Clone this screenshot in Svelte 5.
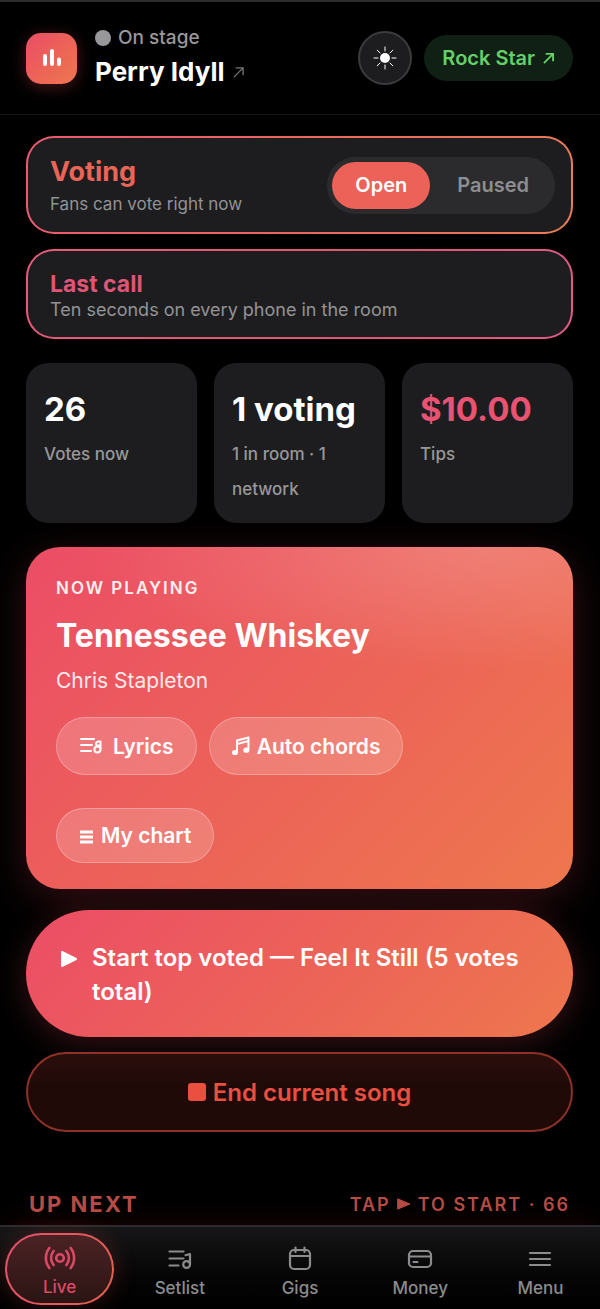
<script lang="ts">
	type Tab = { id: string; label: string };

	const stats = [
		{ value: '26', label: 'Votes now', accent: false },
		{ value: '1 voting', label: '1 in room · 1 network', accent: false },
		{ value: '$10.00', label: 'Tips', accent: true }
	];

	const tabs: Tab[] = [
		{ id: 'live', label: 'Live' },
		{ id: 'setlist', label: 'Setlist' },
		{ id: 'gigs', label: 'Gigs' },
		{ id: 'money', label: 'Money' },
		{ id: 'menu', label: 'Menu' }
	];

	let votingOpen = $state(true);
	let activeTab = $state('live');
</script>

{#snippet arrow(size: number)}
	<svg class="arrow" width={size} height={size} viewBox="0 0 12 12" aria-hidden="true">
		<path d="M1 11 L11 1 M3 1 H11 V9" />
	</svg>
{/snippet}

{#snippet tabIcon(id: string)}
	<svg class="tab-icon" width="28" height="28" viewBox="0 0 28 28" aria-hidden="true">
		{#if id === 'live'}
			<g stroke-width="2.6">
				<circle cx="14" cy="14" r="3.8" />
				<path d="M7.6 7 a11 11 0 0 0 0 14 M20.4 7 a11 11 0 0 1 0 14" />
				<path d="M3.4 4 a16 16 0 0 0 0 20 M24.6 4 a16 16 0 0 1 0 20" />
			</g>
		{:else if id === 'setlist'}
			<path d="M3.5 6.5 H17.5 M3.5 13.5 H17.5 M3.5 20.5 H12.5" />
			<path d="M24 19 V9 L19.5 10.2" />
			<circle cx="20.6" cy="19.5" r="3.4" />
		{:else if id === 'gigs'}
			<rect x="4" y="5" width="20" height="19" rx="4" />
			<path d="M4 11 H24 M9.5 2.5 V7 M18.5 2.5 V7" />
		{:else if id === 'money'}
			<rect x="3" y="6" width="22" height="16" rx="4" />
			<path d="M3 11.5 H25 M7.5 17 H11.5" />
		{:else}
			<path d="M4 8 H24 M4 14 H24 M4 20 H24" />
		{/if}
	</svg>
{/snippet}

<div class="page">
	<header>
		<div class="logo">
			<svg width="20" height="20" viewBox="0 0 20 20" aria-hidden="true">
				<path d="M3 8 V16 M10 3 V16 M17 11.5 V16" />
			</svg>
		</div>
		<div class="artist">
			<div class="status"><span class="dot"></span>On stage</div>
			<a class="name" href="#artist">Perry Idyll {@render arrow(11)}</a>
		</div>
		<button class="theme" aria-label="Switch theme">
			<svg width="24" height="24" viewBox="0 0 24 24" aria-hidden="true">
				<circle cx="12" cy="12" r="5" fill="#fff" />
				<path
					d="M12 1 V5 M12 19 V23 M1 12 H5 M19 12 H23 M4.2 4.2 L7 7 M17 17 L19.8 19.8 M4.2 19.8 L7 17 M17 7 L19.8 4.2"
				/>
			</svg>
		</button>
		<a class="plan" href="#plan">Rock Star {@render arrow(11)}</a>
	</header>

	<main>
		<section class="card voting">
			<div class="card-text">
				<h2>Voting</h2>
				<p>Fans can vote right now</p>
			</div>
			<div class="switch">
				<button class:on={votingOpen} onclick={() => (votingOpen = true)}>Open</button>
				<button class:on={!votingOpen} onclick={() => (votingOpen = false)}>Paused</button>
			</div>
		</section>

		<button class="card last-call">
			<strong>Last call</strong>
			<span>Ten seconds on every phone in the room</span>
		</button>

		<section class="stats">
			{#each stats as stat}
				<div class="stat">
					<div class="value" class:accent={stat.accent}>{stat.value}</div>
					<div class="label">{stat.label}</div>
				</div>
			{/each}
		</section>

		<section class="playing">
			<div class="eyebrow">NOW PLAYING</div>
			<h1>Tennessee Whiskey</h1>
			<p>Chris Stapleton</p>
			<div class="chips">
				<button class="chip tall lyrics">
					<svg width="24" height="20" viewBox="0 0 24 20" aria-hidden="true">
						<path d="M2 3 H15 M2 9 H13 M2 15 H12" />
						<path d="M21.5 5.5 V14 M21.5 5.5 Q17 5 17 8 Q17 10 21.5 9.5" />
						<ellipse cx="18.4" cy="13.5" rx="3" ry="3" />
					</svg>
					Lyrics
				</button>
				<button class="chip tall">
					<svg width="18" height="20" viewBox="0 0 18 20" aria-hidden="true">
						<path d="M5 16 V4.5 L16.5 1.5 V13.5 M5 8 L16.5 5" />
						<ellipse class="solid" cx="3" cy="16.5" rx="2" ry="1.6" />
						<ellipse class="solid" cx="14.3" cy="14.2" rx="2" ry="1.6" />
					</svg>
					Auto chords
				</button>
				<button class="chip">
					<svg width="15" height="16" viewBox="0 0 15 16" aria-hidden="true">
						<path class="bars" d="M1 4 H14 M1 9 H14 M1 14 H14" />
					</svg>
					My chart
				</button>
			</div>
		</section>

		<button class="start">
			<svg width="18" height="18" viewBox="0 0 18 18" aria-hidden="true">
				<path d="M2 2 L16 9 L2 16 Z" />
			</svg>
			<span>Start top voted — Feel It Still (5 votes total)</span>
		</button>

		<button class="end"><span class="stop"></span>End current song</button>

		<div class="queue-head">
			<h3>UP NEXT</h3>
			<span>
				TAP
				<svg width="14" height="14" viewBox="0 0 14 14" aria-hidden="true">
					<path d="M1 2 L13 7 L1 12 Z" />
				</svg>
				TO START · 66
			</span>
		</div>
	</main>

	<nav>
		{#each tabs as tab}
			<button
				class="tab"
				class:active={tab.id === activeTab}
				onclick={() => (activeTab = tab.id)}
			>
				{@render tabIcon(tab.id)}
				{tab.label}
			</button>
		{/each}
	</nav>
</div>

<style>
	:global(body) {
		background: #000;
	}

	.page {
		--pink: #ec4d66;
		--coral: #ec6258;
		--orange: #ee774e;
		--surface: #1d1d1f;
		--muted: #8e8e90;
		--brand: linear-gradient(135deg, var(--pink), var(--coral) 50%, var(--orange));
		display: flex;
		flex-direction: column;
		min-height: 100vh;
		box-sizing: border-box;
		border-top: 2px solid #2c2c2e;
		background: #000;
		color: #fff;
		font-family: Inter, 'Liberation Sans', sans-serif;
	}

	button {
		font: inherit;
		color: inherit;
		border: 0;
		padding: 0;
		background: none;
		cursor: pointer;
	}

	a {
		color: inherit;
		text-decoration: none;
	}

	h1,
	h2,
	h3,
	p {
		margin: 0;
	}

	svg {
		flex: none;
		fill: none;
		stroke: currentColor;
		stroke-linecap: round;
		stroke-linejoin: round;
	}

	header {
		display: flex;
		align-items: center;
		gap: 12px;
		height: 112px;
		padding: 0 27px 0 26px;
		border-bottom: 1px solid #161618;
	}

	.logo {
		display: grid;
		place-items: center;
		width: 51px;
		height: 51px;
		border-radius: 15px;
		background: var(--brand);
		box-shadow: 0 3px 16px rgba(238, 75, 90, 0.3);
	}

	.logo svg {
		stroke-width: 4;
	}

	.artist {
		flex: 1;
		padding-left: 6px;
	}

	.status {
		display: flex;
		align-items: center;
		gap: 7px;
		color: #98989a;
		font-size: 19px;
		font-weight: 500;
		line-height: 28px;
	}

	.dot {
		width: 16px;
		height: 16px;
		border-radius: 50%;
		background: #98989a;
	}

	.name {
		display: flex;
		align-items: center;
		gap: 9px;
		font-size: 26px;
		font-weight: 700;
		line-height: 40px;
	}

	.arrow {
		stroke-width: 2;
		stroke-linecap: butt;
		stroke-linejoin: miter;
	}

	.name .arrow {
		color: #77777a;
		stroke-width: 1.4;
	}

	.theme {
		display: grid;
		place-items: center;
		width: 54px;
		height: 54px;
		box-sizing: border-box;
		border: 2px solid #3c3c3e;
		border-radius: 50%;
		background: var(--surface);
	}

	.theme svg {
		stroke-width: 1;
	}

	.theme circle {
		stroke: none;
	}

	.plan {
		display: flex;
		align-items: center;
		gap: 8px;
		height: 46px;
		padding: 0 19px 0 18px;
		border-radius: 23px;
		background: #112014;
		color: #66cf68;
		font-size: 20px;
		font-weight: 600;
	}

	main {
		display: flex;
		flex-direction: column;
		padding: 21px 27px 0 26px;
	}

	.card {
		box-sizing: border-box;
		border: 2px solid transparent;
		border-radius: 28px;
		padding: 0 16px 0 22px;
		text-align: left;
	}

	.card p,
	.card span {
		color: #939395;
		font-size: 17px;
		line-height: 24px;
	}

	.voting {
		display: flex;
		align-items: center;
		justify-content: space-between;
		height: 98px;
		background:
			linear-gradient(var(--surface), var(--surface)) padding-box,
			linear-gradient(100deg, #ea5a72, #e8685c 50%, #ea7c58) border-box;
	}

	.card-text {
		padding-bottom: 3px;
	}

	.voting h2 {
		color: #ea6558;
		font-size: 27px;
		font-weight: 700;
		line-height: 40px;
	}

	.switch {
		display: flex;
		padding: 5px;
		border-radius: 29px;
		background: #2b2b2d;
	}

	.switch button {
		height: 47px;
		padding: 0 23px;
		border-radius: 24px;
		color: var(--muted);
		font-size: 20px;
		font-weight: 600;
	}

	.switch button:last-child {
		padding: 0 21px 0 27px;
	}

	.switch .on {
		background: var(--coral);
		color: #fff;
	}

	.last-call {
		display: flex;
		flex-direction: column;
		justify-content: center;
		height: 90px;
		margin-top: 15px;
		padding-top: 3px;
		background:
			linear-gradient(var(--surface), var(--surface)) padding-box,
			linear-gradient(100deg, #e65a7c, #d95a70 60%, #e2598a) border-box;
	}

	.last-call strong {
		color: #df5577;
		font-size: 23px;
		font-weight: 700;
		line-height: 28px;
	}

	.card.last-call span {
		font-size: 18px;
	}

	.stats {
		display: grid;
		grid-template-columns: repeat(3, 1fr);
		gap: 17px;
		margin-top: 24px;
	}

	.stat {
		min-height: 160px;
		box-sizing: border-box;
		padding: 21px 18px 16px;
		border-radius: 22px;
		background: var(--surface);
	}

	.value {
		margin-bottom: 3px;
		font-size: 33px;
		font-weight: 700;
		line-height: 50px;
		white-space: nowrap;
	}

	.value.accent {
		color: #ea5272;
	}

	.label {
		color: #98989a;
		font-size: 17px;
		font-weight: 500;
		line-height: 35px;
	}

	.playing {
		margin-top: 24px;
		padding: 26px 30px;
		border-radius: 34px;
		background:
			radial-gradient(ellipse 70% 36% at 82% 0, rgba(255, 255, 255, 0.18), transparent),
			var(--brand);
		box-shadow: 0 10px 42px rgba(238, 75, 90, 0.22);
	}

	.eyebrow {
		font-size: 17px;
		font-weight: 600;
		letter-spacing: 2px;
		line-height: 30px;
		opacity: 0.9;
	}

	.playing h1 {
		margin-top: 8px;
		font-size: 32px;
		font-weight: 700;
		line-height: 50px;
	}

	.playing p {
		margin-top: 5px;
		font-size: 21px;
		line-height: 30px;
		opacity: 0.88;
	}

	.chips {
		display: flex;
		flex-wrap: wrap;
		gap: 33px 12px;
		margin-top: 21px;
	}

	.chip {
		display: flex;
		align-items: center;
		gap: 7px;
		height: 55px;
		box-sizing: border-box;
		padding: 0 22px;
		border: 1px solid rgba(255, 255, 255, 0.25);
		border-radius: 29px;
		background: rgba(255, 255, 255, 0.18);
		font-size: 21px;
		font-weight: 600;
	}

	.chip.tall {
		height: 58px;
	}

	.chip.lyrics {
		gap: 10px;
	}

	.chip svg {
		stroke-width: 2;
	}

	.chip .solid {
		fill: currentColor;
	}

	.chip .bars {
		stroke-width: 3;
		stroke-linecap: butt;
	}

	.start {
		display: flex;
		align-items: flex-start;
		gap: 14px;
		margin-top: 21px;
		padding: 31px 34px 28px;
		border-radius: 64px;
		background: var(--brand);
		box-shadow: 0 6px 32px rgba(238, 75, 90, 0.24);
		font-size: 24px;
		font-weight: 600;
		line-height: 34px;
		text-align: left;
	}

	.start svg {
		margin-top: 9px;
		fill: currentColor;
		stroke-width: 2;
	}

	.end {
		display: flex;
		align-items: center;
		justify-content: center;
		gap: 7px;
		height: 80px;
		margin-top: 15px;
		border: 2px solid #8e3129;
		box-sizing: border-box;
		border-radius: 40px;
		background: linear-gradient(#2b0e0c, #200a08 40%);
		color: #ea4f40;
		font-size: 24px;
		font-weight: 600;
	}

	.stop {
		width: 18px;
		height: 18px;
		border-radius: 3px;
		background: currentColor;
	}

	.queue-head {
		display: flex;
		align-items: center;
		justify-content: space-between;
		margin-top: 56px;
		padding: 0 3px;
		color: #b94d46;
		line-height: 30px;
	}

	.queue-head h3 {
		font-size: 22px;
		font-weight: 700;
		letter-spacing: 2px;
	}

	.queue-head span {
		padding-top: 2px;
		font-size: 18px;
		font-weight: 600;
		letter-spacing: 2px;
	}

	.queue-head svg {
		fill: currentColor;
	}

	nav {
		position: sticky;
		bottom: 0;
		display: grid;
		grid-template-columns: repeat(5, 1fr);
		gap: 11px;
		margin-top: auto;
		padding: 6px 5px 4px;
		border-top: 2px solid #2b2b2d;
		background: linear-gradient(#161618, #050505 60%, #000);
		box-shadow: 0 -4px 28px rgba(120, 20, 20, 0.18);
	}

	.tab {
		display: flex;
		flex-direction: column;
		align-items: center;
		justify-content: center;
		gap: 2px;
		height: 72px;
		box-sizing: border-box;
		padding-top: 8px;
		border: 2px solid transparent;
		border-radius: 36px;
		color: #8c8c8e;
		font-size: 17px;
		font-weight: 500;
		line-height: 26px;
	}

	.tab-icon {
		overflow: visible;
		stroke-width: 2.2;
	}

	.tab.active {
		padding-top: 5px;
		color: #dd4866;
		background:
			linear-gradient(#4b2224, #2a1513) padding-box,
			linear-gradient(120deg, #e8506e, #e2604f) border-box;
		box-shadow: 0 0 24px rgba(238, 90, 76, 0.22);
	}
</style>
